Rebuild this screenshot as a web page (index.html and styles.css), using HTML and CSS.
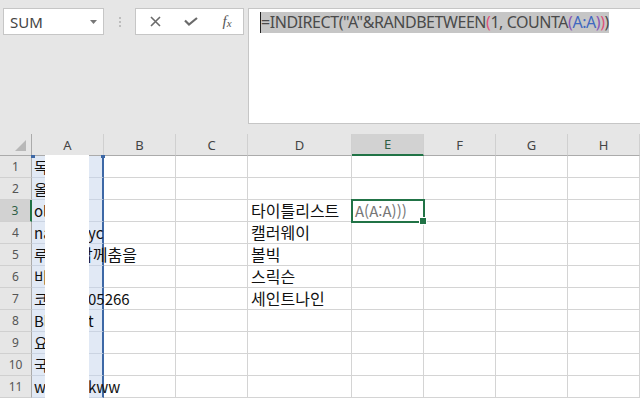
FILE: index.html
```html
<!DOCTYPE html>
<html lang="ko">
<head>
  <meta charset="UTF-8">
  <title>Sheet1</title>
  <link rel="stylesheet" href="styles.css">
</head>
<body>
  <div class="bar">
    <div class="namebox">
      <span>SUM</span>
      <svg width="7" height="4" viewBox="0 0 7 4"><path d="M0 0h7L3.5 4z" fill="#777"/></svg>
    </div>
    <div class="grip"><i></i><i></i><i></i></div>
    <div class="fnbox">
      <svg width="11" height="11" viewBox="0 0 11 11"><path d="M1 1l9 9M10 1l-9 9" stroke="#6a6a6a" stroke-width="1.6" fill="none"/></svg>
      <svg width="14" height="9" viewBox="0 0 14 9"><path d="M1 3.5l4 4L13 1" stroke="#6a6a6a" stroke-width="2.2" fill="none"/></svg>
      <span class="fx">f<sub>x</sub></span>
    </div>
    <div class="formula">
      <span class="sel">=INDIRECT("A"&amp;RANDBETWEEN<span class="p1">(</span>1, COUNTA<span class="p2">(</span><span class="ref">A:A</span><span class="p2">)</span><span class="p1">)</span>)</span>
    </div>
  </div>

  <div class="sheet" id="sheet"></div>

  <script>
    const cols = ["A", "B", "C", "D", "E", "F", "G", "H"];

    // column A: visible start of the text, and what spills past the blank strip
    const colA = [
      ["독"], ["올"], ["ol"], ["na", "yc"], ["루", "갑께춤을"], ["비"],
      ["코", "05266"], ["Bl", "t"], ["요"], ["국"], ["w", "kww"]
    ];
    const colD = { 3: "타이틀리스트", 4: "캘러웨이", 5: "볼빅", 6: "스릭슨", 7: "세인트나인" };

    let html = '<div class="hd corner"><span class="tri"></span></div>';
    cols.forEach(c => {
      html += `<div class="hd${c === "E" ? " on" : ""}">${c}</div>`;
    });

    for (let r = 1; r <= 11; r++) {
      html += `<div class="rh${r === 3 ? " on" : ""}">${r}</div>`;
      const [head, tail] = colA[r - 1];
      html += `<div class="cell a"><span class="head">${head}</span>`;
      if (tail) html += `<span class="tail${r === 5 ? " early ko" : ""}">${tail}</span>`;
      html += `</div>`;
      cols.slice(1).forEach(c => {
        if (c === "D") {
          html += `<div class="cell ko">${colD[r] || ""}</div>`;
        } else if (c === "E" && r === 3) {
          html += `<div class="cell active">A(A:A)))</div>`;
        } else {
          html += `<div class="cell"></div>`;
        }
      });
    }

    html += '<div class="blank"></div><div class="mark left"></div><div class="mark right"></div>';
    document.getElementById("sheet").innerHTML = html;
  </script>
</body>
</html>
```

FILE: styles.css
```css
* {
  box-sizing: border-box;
}
body {
  margin: 0;
  width: 640px;
  height: 398px;
  overflow: hidden;
  background: #e6e6e6;
  font-family: "Noto Sans", sans-serif;
  color: #444;
}
.bar {
  display: flex;
  align-items: flex-start;
  height: 134px;
  padding: 8px 0 0 3px;
}
.namebox {
  width: 101px;
  height: 27px;
  flex: none;
  background: #fff;
  border: 1px solid #c6c6c6;
  display: flex;
  align-items: center;
  justify-content: space-between;
  padding: 0 6px 0 6px;
  font-size: 15px;
}
.grip {
  width: 31px;
  flex: none;
  display: flex;
  flex-direction: column;
  align-items: center;
  gap: 2px;
  padding-top: 9px;
}
.grip i {
  width: 2px;
  height: 2px;
  background: #bdbdbd;
}
.fnbox {
  width: 109px;
  height: 27px;
  flex: none;
  background: #fff;
  border: 1px solid #c6c6c6;
  display: grid;
  grid-template-columns: repeat(3, 36px);
  align-items: center;
  justify-items: center;
  padding-left: 1px;
}
.fx {
  font-family: "Liberation Serif", serif;
  font-style: italic;
  font-size: 15px;
  color: #555;
  line-height: 1;
}
.fx sub {
  font-size: 11px;
  vertical-align: -1px;
}
.formula {
  flex: 1;
  height: 116px;
  margin: 0 -2px 0 4px;
  background: #fff;
  border: 1px solid #c6c6c6;
  padding: 2px 0 0 11px;
}
.sel {
  display: inline-block;
  background: #c6c6c6;
  border-left: 1px solid #222;
  line-height: 21px;
  font-size: 16px;
  letter-spacing: -0.45px;
  color: #4a4a4a;
  white-space: nowrap;
}
.p1 {
  color: #e0527a;
}
.p2 {
  color: #8a55b5;
}
.ref {
  color: #3f68c0;
}

.sheet {
  position: relative;
  display: grid;
  grid-template-columns: 32px repeat(3, 72px) 104px repeat(4, 72px);
  grid-auto-rows: 22px;
  background: #fff;
}
.hd {
  background: #e6e6e6;
  border-right: 1px solid #d0d0d0;
  border-bottom: 1px solid #ababab;
  display: flex;
  align-items: center;
  justify-content: center;
  font-size: 13px;
}
.hd.on {
  background: #d2d2d2;
  border-bottom: 2px solid #217346;
  color: #2f5f45;
}
.corner {
  border-right-color: #ababab;
  align-items: flex-end;
  justify-content: flex-end;
  padding: 0 5px 4px 0;
}
.tri {
  width: 0;
  height: 0;
  border-left: 11px solid transparent;
  border-bottom: 11px solid #b8b8b8;
}
.rh {
  background: #e6e6e6;
  border-right: 1px solid #ababab;
  border-bottom: 1px solid #d0d0d0;
  display: flex;
  align-items: center;
  justify-content: center;
  font-size: 12px;
  color: #555;
}
.rh.on {
  background: #d2d2d2;
  border-right: 2px solid #217346;
  color: #2f5f45;
}
.cell {
  border-right: 1px solid #d4d4d4;
  border-bottom: 1px solid #d4d4d4;
  font-family: "Noto Sans CJK KR", "Noto Sans", sans-serif;
  font-size: 15px;
  line-height: 21px;
  padding-left: 3px;
  color: #111;
  white-space: nowrap;
}
.ko {
  font-size: 16px;
}
.cell.a {
  display: flex;
  background: #e1e9f5;
  border-right: 2px solid #3d68a6;
  border-bottom-color: #cbd4e2;
  padding-left: 2px;
}
.head {
  width: 54px;
  flex: none;
  overflow: hidden;
}
.tail {
  flex: none;
}
.tail.early {
  margin-left: -10px;
}
.cell.active {
  position: relative;
  z-index: 1;
  outline: 2px solid #217346;
  outline-offset: -1px;
  color: #777;
}
.cell.active::after {
  content: "";
  position: absolute;
  right: -4px;
  bottom: -4px;
  width: 6px;
  height: 6px;
  background: #217346;
  border: 1px solid #fff;
}
.blank {
  position: absolute;
  left: 45px;
  top: 21px;
  width: 44px;
  bottom: 0;
  background: #fff;
}
.mark {
  position: absolute;
  top: 21px;
  width: 4px;
  height: 3px;
  background: #3d68a6;
}
.mark.left {
  left: 31px;
}
.mark.right {
  left: 101px;
}
```
